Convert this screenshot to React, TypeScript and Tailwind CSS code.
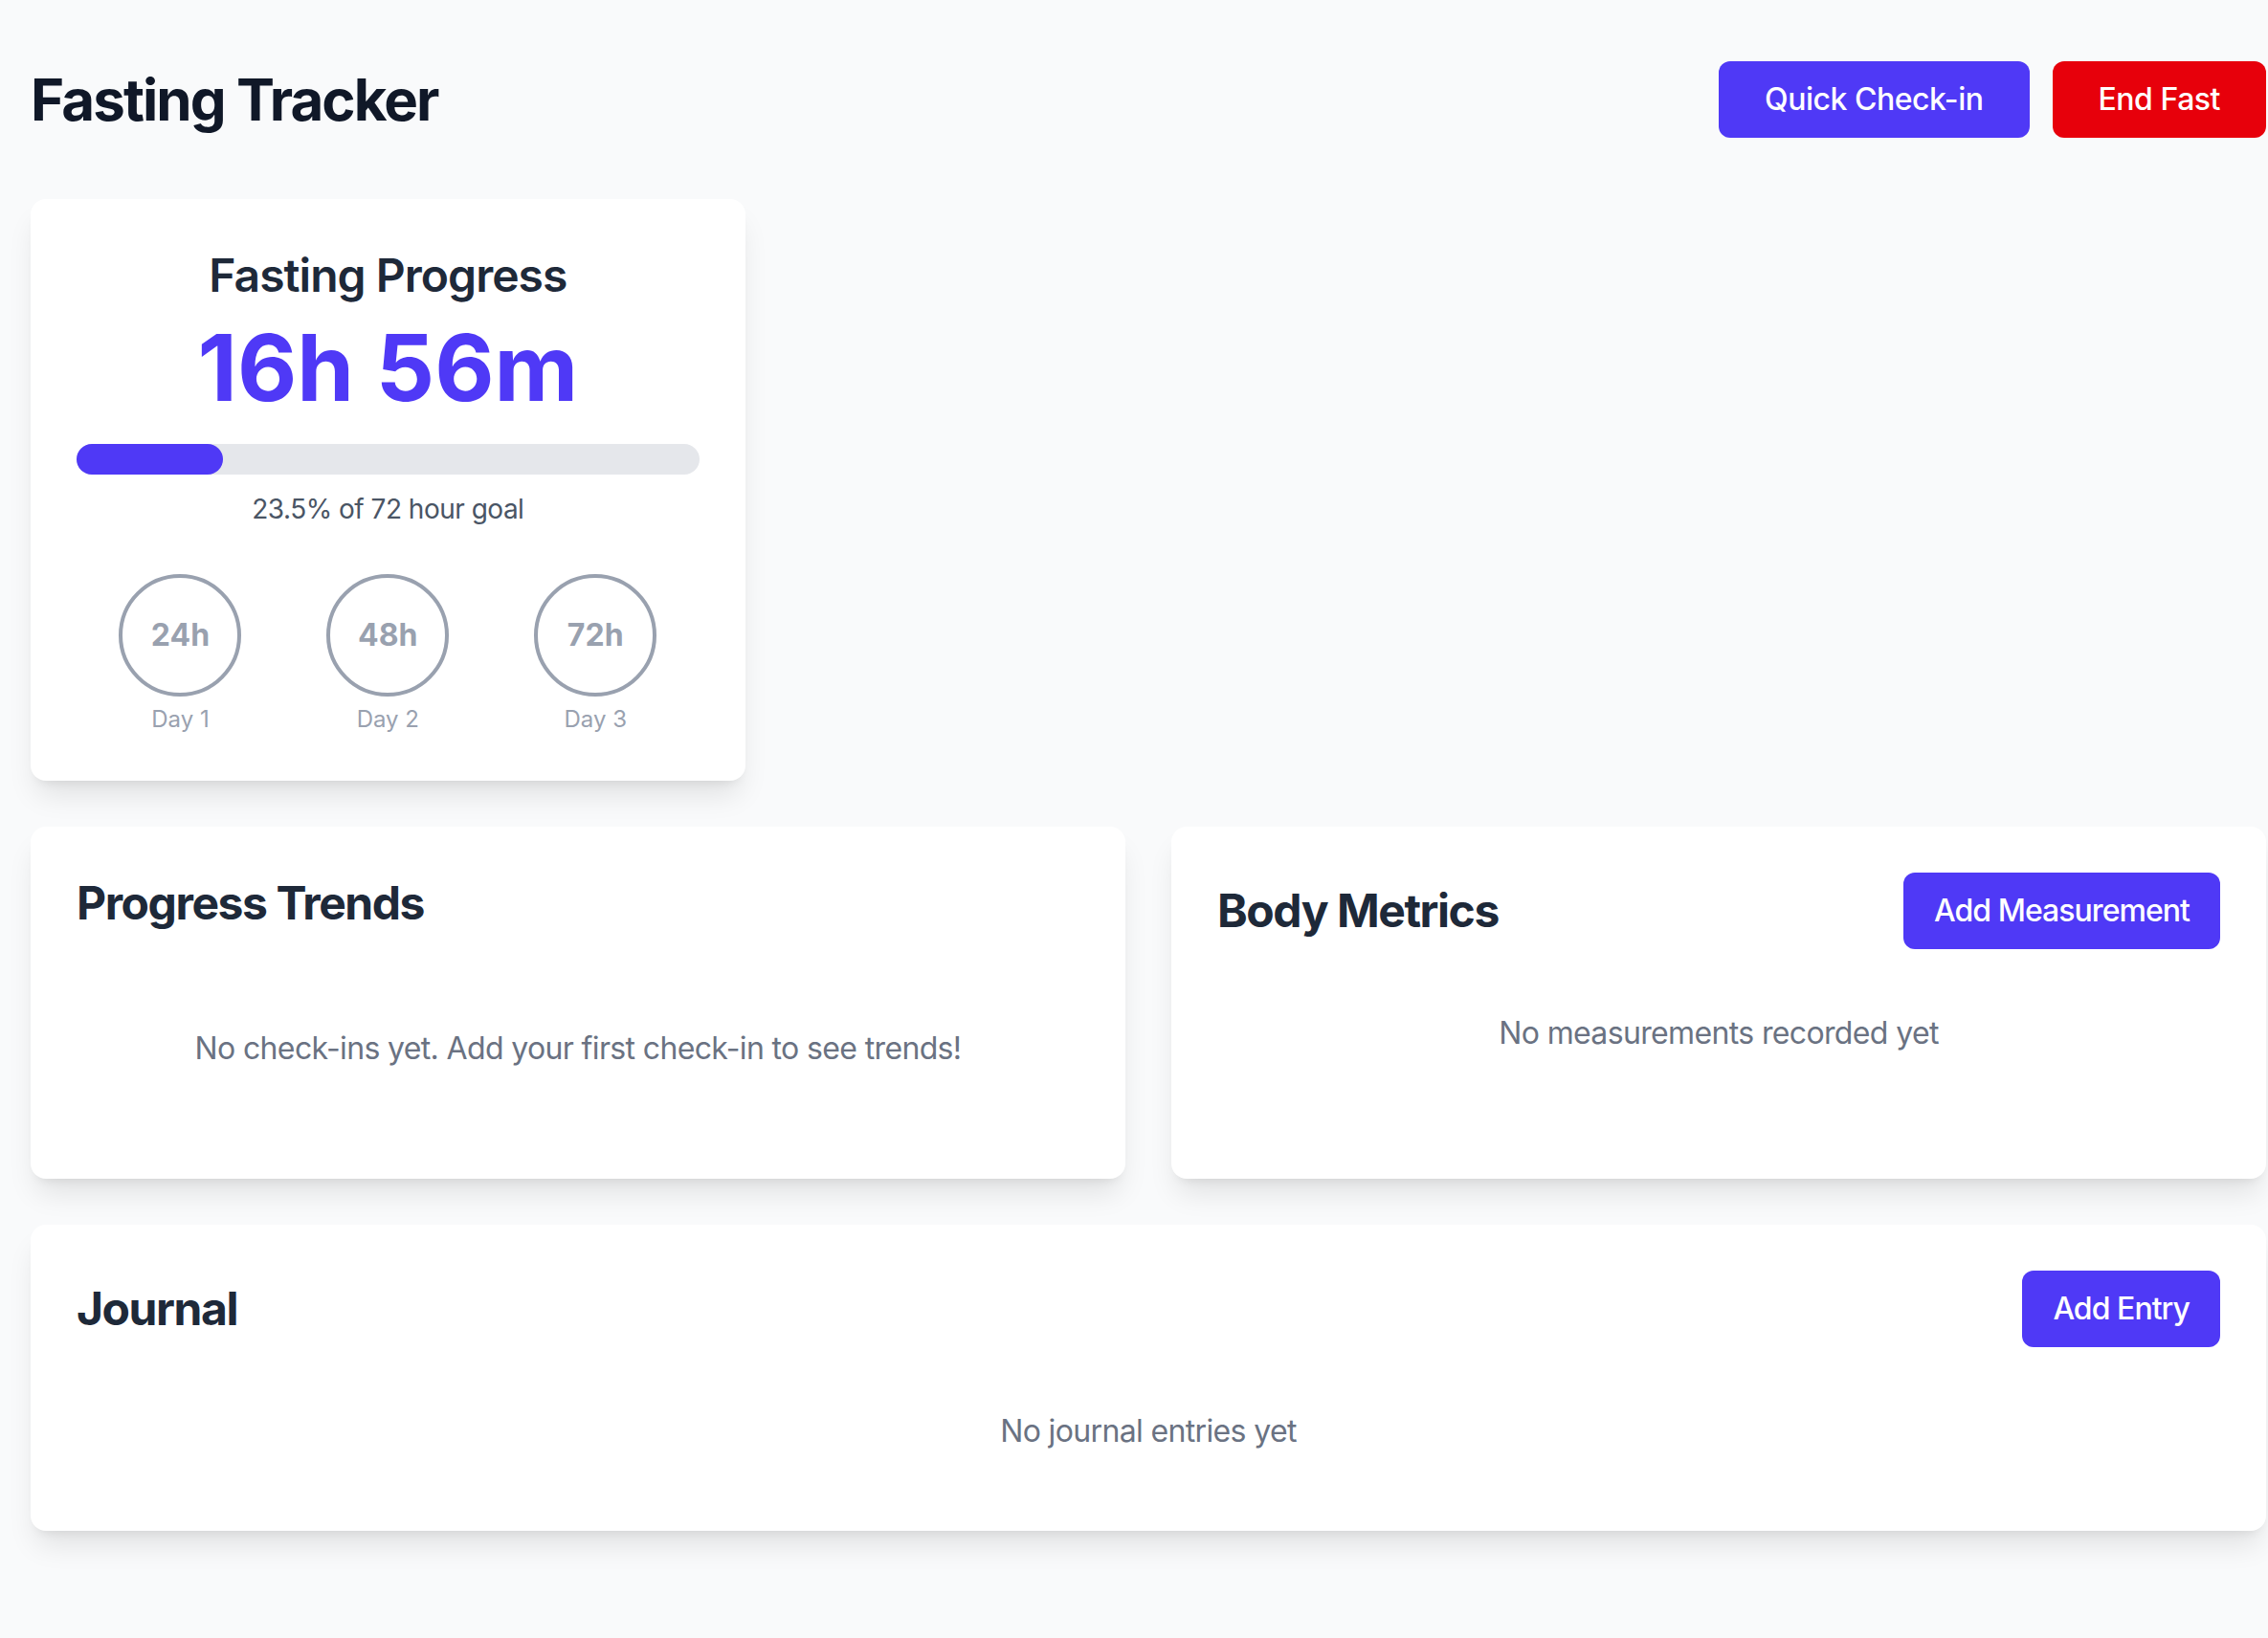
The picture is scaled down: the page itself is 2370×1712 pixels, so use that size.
import React from "react";

const card =
  "bg-white rounded-2xl p-12 shadow-[0_20px_30px_-6px_rgba(0,0,0,0.1),0_8px_12px_-8px_rgba(0,0,0,0.1)]";
const heading = "text-5xl leading-16 font-bold text-gray-800 tracking-[-0.03em]";
const button = "py-4 text-[32px] leading-12 font-medium text-white rounded-xl";
const empty = "text-center text-[32px] leading-12 text-gray-500 tracking-[-0.02em]";

const milestones = [
  { hours: "24h", label: "Day 1" },
  { hours: "48h", label: "Day 2" },
  { hours: "72h", label: "Day 3" },
];

export default function App() {
  const elapsed = 16 * 60 + 56;
  const goal = 72;
  const pct = (elapsed / 60 / goal) * 100;

  return (
    <div className="min-h-screen bg-gray-50 font-['Inter',sans-serif]">
      <div className="pt-16 pb-16 pl-8 pr-0.5">
        <header className="flex items-center justify-between mb-16">
          <h1 className="text-6xl leading-[72px] font-bold text-gray-900 tracking-[-0.032em]">
            Fasting Tracker
          </h1>
          <div className="flex gap-6">
            <button className={`${button} px-12 bg-indigo-600 tracking-[-0.015em]`}>Quick Check-in</button>
            <button className={`${button} px-12 bg-red-600 tracking-[-0.015em]`}>End Fast</button>
          </div>
        </header>

        <div className="flex flex-col gap-12">
          <div className="grid grid-cols-3 gap-12">
            <div className={`${card} text-center`}>
              <h2 className="text-5xl leading-16 font-semibold text-gray-800 mb-4 tracking-[-0.02em]">
                Fasting Progress
              </h2>
              <div className="text-8xl font-bold text-indigo-600 mb-8">16h 56m</div>
              <div className="h-8 w-full rounded-full bg-gray-200">
                <div className="h-8 rounded-full bg-indigo-600" style={{ width: `${pct}%` }} />
              </div>
              <p className="mt-4 text-[28px] leading-10 text-gray-600 tracking-[-0.018em]">
                {pct.toFixed(1)}% of {goal} hour goal
              </p>
              <div className="mt-12 grid grid-cols-3">
                {milestones.map((m) => (
                  <div key={m.hours} className="flex flex-col items-center">
                    <div className="w-32 h-32 rounded-full border-4 border-gray-400 flex items-center justify-center text-[32px] font-bold text-gray-400">
                      {m.hours}
                    </div>
                    <span className="mt-2 text-2xl leading-8 text-gray-400">{m.label}</span>
                  </div>
                ))}
              </div>
            </div>
          </div>

          <div className="grid grid-cols-2 gap-12">
            <div className={card}>
              <h2 className={`${heading} mb-8`}>Progress Trends</h2>
              <p className={`${empty} py-16`}>
                No check-ins yet. Add your first check-in to see trends!
              </p>
            </div>
            <div className={card}>
              <div className="flex items-center justify-between mb-8">
                <h2 className={heading}>Body Metrics</h2>
                <button className={`${button} px-8 bg-indigo-600 tracking-[-0.03em]`}>Add Measurement</button>
              </div>
              <p className={`${empty} py-8`}>No measurements recorded yet</p>
            </div>
          </div>

          <div className={card}>
            <div className="flex items-center justify-between mb-8">
              <h2 className={heading}>Journal</h2>
              <button className={`${button} px-8 bg-indigo-600 tracking-[-0.03em]`}>Add Entry</button>
            </div>
            <p className={`${empty} py-8`}>No journal entries yet</p>
          </div>
        </div>
      </div>
    </div>
  );
}
